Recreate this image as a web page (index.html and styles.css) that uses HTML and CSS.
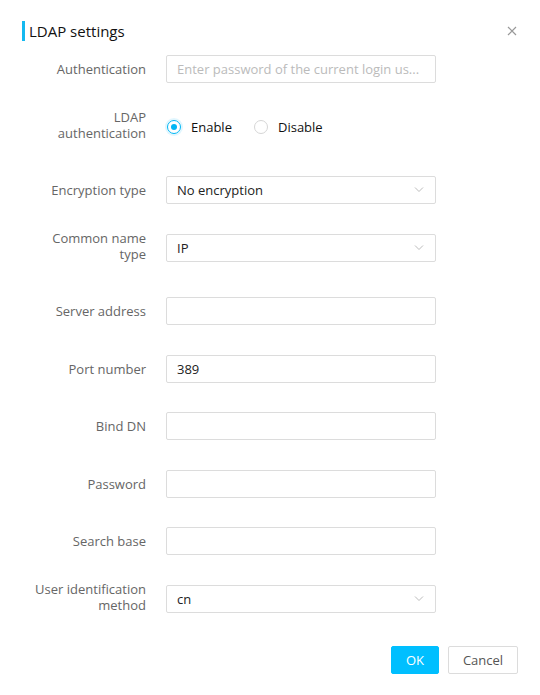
FILE: index.html
```html
<!DOCTYPE html>
<html lang="en">
<head>
<meta charset="utf-8">
<title>LDAP settings</title>
<link rel="stylesheet" href="styles.css">
</head>
<body>
<div class="dialog">
  <header class="head">
    <h1 class="title">LDAP settings</h1>
    <button class="close" type="button" aria-label="Close">
      <svg width="12" height="12" viewBox="0 0 12 12"><path d="M2 2 L10 10 M10 2 L2 10" stroke="#999" stroke-width="1.2" fill="none"/></svg>
    </button>
  </header>
  <form class="form">
    <div class="row">
      <label class="label">Authentication</label>
      <div class="field placeholder">Enter password of the current login us...</div>
    </div>
    <div class="row tall">
      <label class="label">LDAP authentication</label>
      <div class="radios">
        <span class="radio on"></span><span class="rtext">Enable</span>
        <span class="radio"></span><span class="rtext">Disable</span>
      </div>
    </div>
    <div class="row">
      <label class="label">Encryption type</label>
      <div class="field select"><span>No encryption</span><svg class="chev" width="10" height="6" viewBox="0 0 10 6"><path d="M1 0.5 L5 4.5 L9 0.5" stroke="#bbb" stroke-width="1" fill="none"/></svg></div>
    </div>
    <div class="row tall">
      <label class="label">Common name type</label>
      <div class="field select"><span>IP</span><svg class="chev" width="10" height="6" viewBox="0 0 10 6"><path d="M1 0.5 L5 4.5 L9 0.5" stroke="#bbb" stroke-width="1" fill="none"/></svg></div>
    </div>
    <div class="row tight">
      <label class="label">Server address</label>
      <div class="field"></div>
    </div>
    <div class="row tight">
      <label class="label">Port number</label>
      <div class="field">389</div>
    </div>
    <div class="row tight">
      <label class="label">Bind DN</label>
      <div class="field"></div>
    </div>
    <div class="row tight">
      <label class="label">Password</label>
      <div class="field"></div>
    </div>
    <div class="row tight">
      <label class="label">Search base</label>
      <div class="field"></div>
    </div>
    <div class="row last">
      <label class="label">User identification method</label>
      <div class="field select"><span>cn</span><svg class="chev" width="10" height="6" viewBox="0 0 10 6"><path d="M1 0.5 L5 4.5 L9 0.5" stroke="#bbb" stroke-width="1" fill="none"/></svg></div>
    </div>
  </form>
  <footer class="foot">
    <button class="btn primary" type="button">OK</button>
    <button class="btn" type="button">Cancel</button>
  </footer>
</div>
</body>
</html>
```
FILE: styles.css
```css
* { box-sizing: border-box; }
html, body { margin: 0; padding: 0; background: #fff; }
body {
  font-family: "Open Sans", "Noto Sans", "Liberation Sans", sans-serif;
  font-size: 13px;
  color: #333;
}
.dialog {
  width: 540px;
  height: 695px;
  padding: 21px 22px 0 22px;
}
.head {
  display: flex;
  align-items: center;
  justify-content: space-between;
  height: 20px;
}
.title {
  margin: 0;
  height: 20px;
  padding-left: 4px;
  border-left: 3px solid #14b9f0;
  font-size: 15px;
  font-weight: 400;
  line-height: 20px;
  color: #111;
}
.close {
  width: 12px;
  height: 12px;
  padding: 0;
  border: 0;
  background: none;
  display: flex;
}
.form {
  margin-top: 14px;
  padding-left: 8px;
}
.row {
  display: flex;
  align-items: center;
  height: 28px;
  margin-bottom: 30px;
}
.row.tight {
  margin-bottom: 29.5px;
}
.row.last {
  margin-bottom: 33px;
}
.row.tall {
  height: 33px;
  align-items: flex-start;
}
.label {
  width: 116px;
  flex: none;
  margin-right: 20px;
  text-align: right;
  line-height: 16px;
  color: #666;
}
.row.tall .label {
  margin-top: -4px;
}
.row.last .label {
  margin-top: -3px;
}
.field {
  width: 270px;
  height: 28px;
  border: 1px solid #dcdcdc;
  border-radius: 2px;
  padding: 0 10px;
  display: flex;
  align-items: center;
  color: #222;
  white-space: nowrap;
  overflow: hidden;
}
.placeholder { color: #bbb; }
.select { justify-content: space-between; padding-right: 11px; }
.chev { flex: none; }
.radios {
  display: flex;
  align-items: center;
  height: 28px;
}
.radio {
  width: 14px;
  height: 14px;
  margin-left: 1px;
  border: 1px solid #d6d6d6;
  border-radius: 50%;
  flex: none;
  position: relative;
}
.radio.on {
  border-color: #00b6f5;
  box-shadow: 0 0 0 2px rgba(0, 182, 245, 0.12);
}
.radio.on::after {
  content: "";
  position: absolute;
  left: 3px;
  top: 3px;
  width: 6px;
  height: 6px;
  border-radius: 50%;
  background: #00b6f5;
}
.rtext {
  margin-left: 10px;
  margin-right: 21px;
  color: #111;
}
.foot {
  display: flex;
  justify-content: flex-end;
  gap: 9px;
}
.btn {
  height: 28px;
  width: 70px;
  padding: 0;
  border: 1px solid #dcdcdc;
  border-radius: 2px;
  background: #fff;
  font-family: inherit;
  font-size: 13px;
  color: #555;
}
.btn.primary {
  width: 48px;
  border-color: #00bfff;
  background: #00bfff;
  color: #fff;
}
```
